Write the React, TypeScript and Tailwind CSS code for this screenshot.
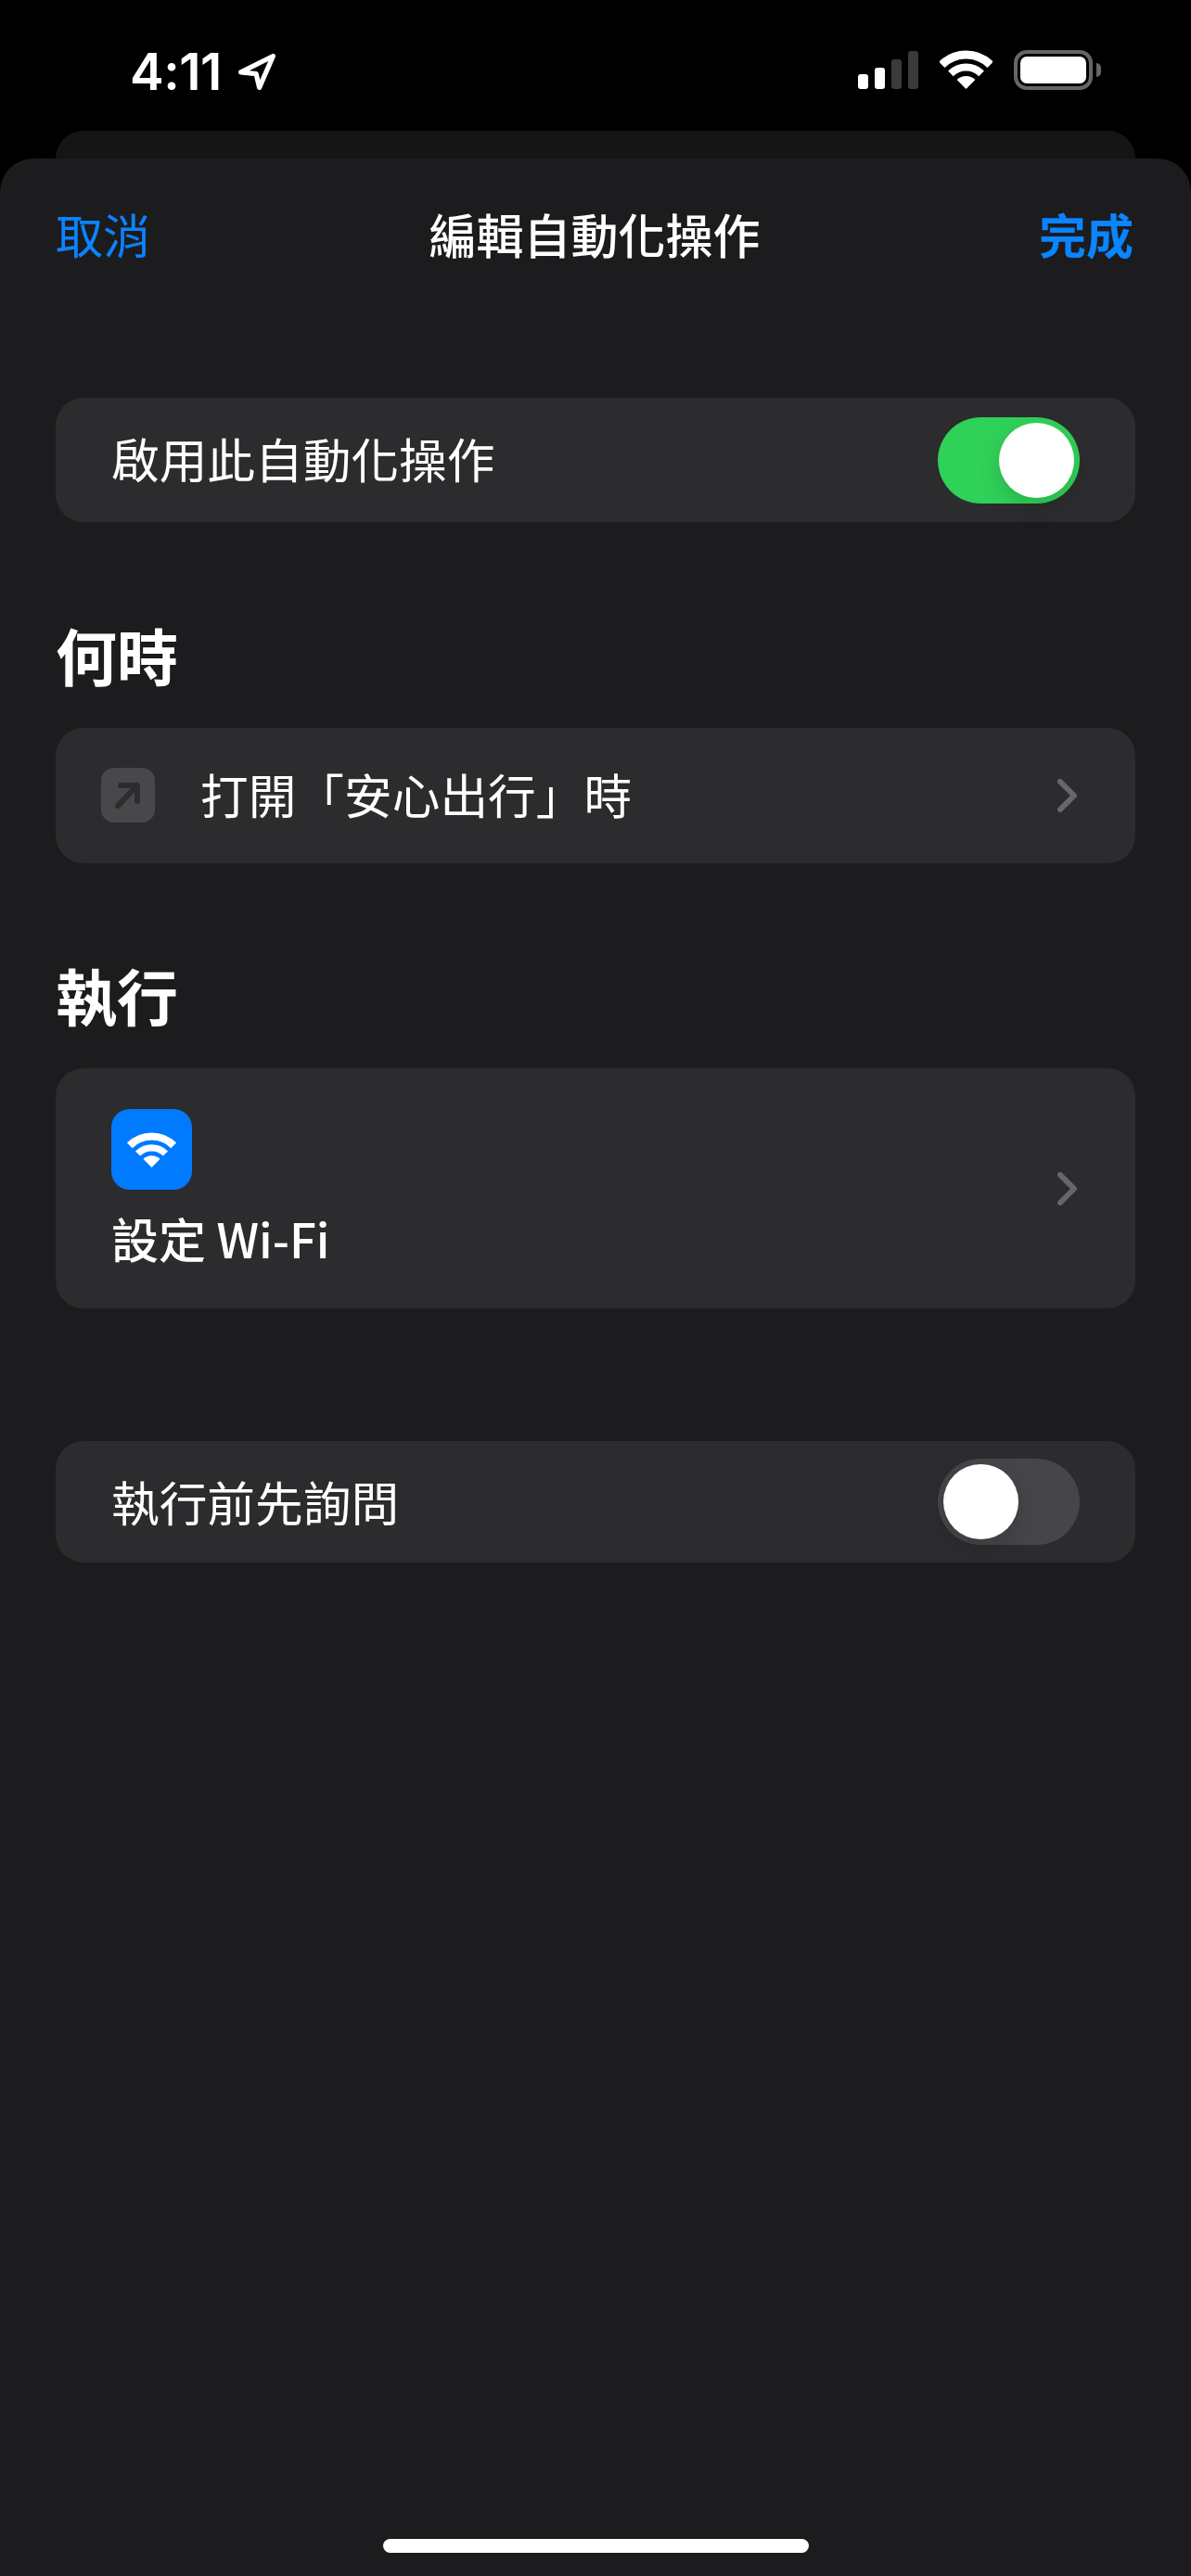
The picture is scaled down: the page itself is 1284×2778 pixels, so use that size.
const cjk = "font-['Noto_Sans_CJK_TC','Noto_Sans',sans-serif]";

function WifiGlyph({ className }: { className: string }) {
  return (
    <svg viewBox="0 0 57 42" className={className} fill="none">
      <path d="M2.3 15.8A37 37 0 0 1 54.7 15.8" stroke="white" strokeWidth="9" />
      <path d="M11.9 25.4A23.5 23.5 0 0 1 45.1 25.4" stroke="white" strokeWidth="8" />
      <path d="M28.5 42L18.6 32.1A14 14 0 0 1 38.4 32.1Z" fill="white" />
    </svg>
  );
}

function Chevron() {
  return (
    <svg viewBox="0 0 21 36" className="w-[21px] h-[36px] shrink-0" fill="none">
      <path d="M3 3L18 18L3 33" stroke="#66666b" strokeWidth="6" strokeLinecap="round" strokeLinejoin="round" />
    </svg>
  );
}

function Toggle({ on }: { on: boolean }) {
  return (
    <div className={`w-[153px] h-[93px] rounded-full p-[6px] flex ${on ? "bg-[#30d158] justify-end" : "bg-[#46464a] justify-start"}`}>
      <div className="w-[81px] h-[81px] rounded-full bg-white shadow-[0_9px_24px_rgba(0,0,0,0.15)]" />
    </div>
  );
}

function StatusBar() {
  return (
    <div className="h-[141px] bg-black text-white flex items-start justify-between pl-[140px] pr-[97px] pt-[54px]">
      <div className="flex items-center gap-[17px] h-[42px] pt-[4px]">
        <span className="font-['Inter',sans-serif] font-semibold text-[55px] leading-[42px] tracking-[-0.5px]">4:11</span>
        <svg viewBox="0 0 48 46" className="w-[42px] h-[40px]" fill="none">
          <path d="M4 24L44 4L27 43L23 26Z" stroke="white" strokeWidth="6" strokeLinejoin="round" />
        </svg>
      </div>
      <div className="flex items-start">
        <div className="flex items-end gap-[7px] h-[42px]">
          <div className="w-[11px] h-[16px] rounded-[3px] bg-white" />
          <div className="w-[11px] h-[23px] rounded-[3px] bg-white" />
          <div className="w-[11px] h-[32px] rounded-[3px] bg-[#3a3a3a]" />
          <div className="w-[11px] h-[41px] rounded-[3px] bg-[#3a3a3a]" />
        </div>
        <WifiGlyph className="w-[57px] h-[42px] ml-[23px]" />
        <div className="ml-[23px] w-[85px] h-[43px] rounded-[14px] border-[4px] border-[#666666] p-[3px]">
          <div className="w-full h-full rounded-[7px] bg-white" />
        </div>
        <div className="ml-[4px] mt-[14px] w-[5px] h-[15px] rounded-r-full bg-[#666666]" />
      </div>
    </div>
  );
}

export default function App() {
  return (
    <div className={`min-h-[2778px] bg-black flex flex-col ${cjk}`}>
      <StatusBar />
      <div className="mx-[60px] h-[30px] bg-[#151516] rounded-t-[30px]" />
      <div className="relative flex-1 bg-[#1c1c1e] rounded-t-[36px] px-[60px] text-white">
        <div className="h-[168px] pb-[6px] flex items-center justify-between">
          <span className="text-[51px] text-[#0a84ff]">取消</span>
          <span className="text-[51px] font-medium">編輯自動化操作</span>
          <span className="text-[51px] font-semibold text-[#0a84ff] pr-[2px]">完成</span>
        </div>

        <div className="mt-[90px] h-[134px] bg-[#2c2c2e] rounded-[30px] px-[60px] flex items-center justify-between">
          <span className="text-[51.7px] pb-[4px]">啟用此自動化操作</span>
          <Toggle on />
        </div>

        <h2 className="mt-[99px] mb-[31px] h-[92px] pb-[6px] flex items-center text-[66px] font-bold">何時</h2>
        <div className="h-[146px] bg-[#2c2c2e] rounded-[30px] pl-[49px] pr-[63px] flex items-center justify-between">
          <div className="flex items-center gap-[49px]">
            <div className="w-[58px] h-[59px] rounded-[14px] bg-[#48484a] flex items-center justify-center">
              <svg viewBox="0 0 58 59" className="w-[58px] h-[59px]" fill="none">
                <path d="M18 41L39 19M21 19H39V36" stroke="#2c2c2e" strokeWidth="6" strokeLinecap="round" strokeLinejoin="round" />
              </svg>
            </div>
            <span className="text-[51.7px] pb-[4px]">打開「安心出行」時</span>
          </div>
          <Chevron />
        </div>

        <h2 className="mt-[98px] mb-[31px] h-[92px] pb-[6px] flex items-center text-[66px] font-bold">執行</h2>
        <div className="h-[259px] bg-[#2c2c2e] rounded-[30px] pl-[60px] pr-[63px] flex items-center justify-between">
          <div className="flex flex-col gap-[16px] pt-[4px]">
            <div className="w-[87px] h-[87px] rounded-[20px] bg-[#007aff] flex items-center justify-center">
              <WifiGlyph className="w-[53px] h-[38px]" />
            </div>
            <span className="text-[51px] leading-[72px] font-medium">設定 Wi-Fi</span>
          </div>
          <Chevron />
        </div>

        <div className="mt-[143px] h-[131px] bg-[#2c2c2e] rounded-[30px] px-[60px] flex items-center justify-between">
          <span className="text-[51.7px] pb-[2px]">執行前先詢問</span>
          <Toggle on={false} />
        </div>

        <div className="absolute left-[413px] bottom-[25px] w-[459px] h-[15px] rounded-full bg-white" />
      </div>
    </div>
  );
}
